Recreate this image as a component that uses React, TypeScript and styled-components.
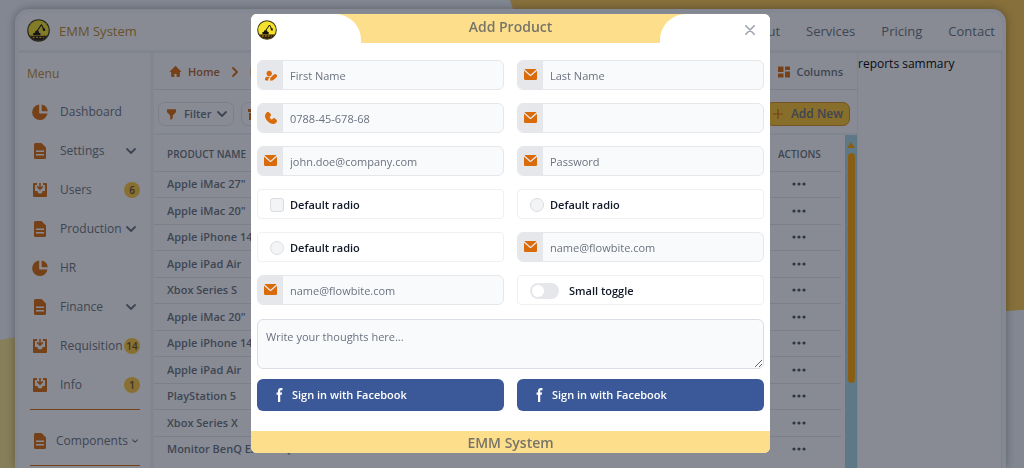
import React from "react";
import styled, { createGlobalStyle, css } from "styled-components";

const font = `"Open Sans", "Noto Sans", sans-serif`;
const amber = "#d96b0a";
const ink = "#6b7280";
const line = "#e5e7eb";

const GlobalStyle = createGlobalStyle`
  *, *::before, *::after { box-sizing: border-box; }
  body { margin: 0; font-family: ${font}; font-size: 12px; line-height: 20px; color: ${ink}; }
  button, input, textarea { font: inherit; color: inherit; margin: 0; }
  button { cursor: pointer; }
  a { color: inherit; text-decoration: none; }
  h1, h2, p, ul { margin: 0; padding: 0; }
  svg { display: block; flex: none; }
`;

/* ---------- icons ---------- */

type IconProps = { size?: number };

const PieIcon = ({ size = 16 }: IconProps) => (
  <svg width={size} height={size} viewBox="0 0 20 20" fill="currentColor" aria-hidden="true">
    <path d="M9 0.600A9.700 9.700 0 1 0 19.400 12H10a1 1 0 0 1-1-1Z" />
    <path d="M12 0.600V8a1 1 0 0 0 1 1h6.800A9.700 9.700 0 0 0 12 .600Z" />
  </svg>
);

const DocIcon = ({ size = 16 }: IconProps) => (
  <svg width={size} height={size} viewBox="0 0 16 16" fill="currentColor" aria-hidden="true">
    <path
      fillRule="evenodd"
      d="M3.500 0h6L14 4.500V14.500a1.500 1.500 0 0 1-1.500 1.500h-9A1.500 1.500 0 0 1 2 14.500v-13A1.500 1.500 0 0 1 3.500 0ZM4 7.500V9h8V7.500ZM4 11v1.500h8V11Z"
    />
  </svg>
);

const InboxIcon = ({ size = 16 }: IconProps) => (
  <svg width={size} height={size} viewBox="0 0 16 16" fill="currentColor" aria-hidden="true">
    <path d="M2 1h3v2H3v6h2.500a2.500 2.500 0 0 0 5 0H13V3h-2V1h3a1 1 0 0 1 1 1v12a1 1 0 0 1-1 1H2a1 1 0 0 1-1-1V2a1 1 0 0 1 1-1Z" />
    <path d="M7.200 1h1.600v4.200l1.500-1.400 1.100 1.100L8 8.200 4.600 4.900l1.100-1.100 1.500 1.400Z" />
  </svg>
);

const Chevron = ({ size = 10, right = false }: { size?: number; right?: boolean }) => (
  <svg width={size} height={size} viewBox="0 0 10 10" fill="none" stroke="currentColor" strokeWidth="1.800" strokeLinecap="round" strokeLinejoin="round" aria-hidden="true">
    <path d={right ? "M3 1l4 4-4 4" : "M1 3l4 4 4-4"} />
  </svg>
);

const HomeIcon = () => (
  <svg width="11" height="11" viewBox="0 0 20 20" fill="currentColor" aria-hidden="true">
    <path d="m19.707 9.293-2-2-7-7a1 1 0 0 0-1.414 0l-7 7-2 2a1 1 0 0 0 1.414 1.414L2 10.414V18a2 2 0 0 0 2 2h3a1 1 0 0 0 1-1v-4a1 1 0 0 1 1-1h2a1 1 0 0 1 1 1v4a1 1 0 0 0 1 1h3a2 2 0 0 0 2-2v-7.586l.293.293a1 1 0 0 0 1.414-1.414Z" />
  </svg>
);

const FunnelIcon = () => (
  <svg width="13" height="13" viewBox="0 0 20 20" fill="currentColor" aria-hidden="true">
    <path d="M3 3a1 1 0 011-1h12a1 1 0 011 1v3a1 1 0 01-.293.707L12 11.414V15a1 1 0 01-.293.707l-2 2A1 1 0 018 17v-5.586L3.293 6.707A1 1 0 013 6V3z" />
  </svg>
);

const BoxIcon = () => (
  <svg width="13" height="13" viewBox="0 0 13 13" fill="currentColor" aria-hidden="true">
    <path d="M0 1h13v3H0ZM1 5h11v7H1Z" />
  </svg>
);

const GridIcon = () => (
  <svg width="12" height="12" viewBox="0 0 12 12" fill="currentColor" aria-hidden="true">
    <path d="M0 .500h5.500v5.500H0ZM7 .500h5v3.500H7ZM0 7.500h5.500v4H0ZM7 5.500h5v6H7Z" />
  </svg>
);

const PlusIcon = () => (
  <svg width="10" height="10" viewBox="0 0 10 10" fill="none" stroke={amber} strokeWidth="1.200" aria-hidden="true">
    <path d="M5 0v10M0 5h10" />
  </svg>
);

const DotsIcon = () => (
  <svg width="14" height="4" viewBox="0 0 14 4" fill="currentColor" aria-hidden="true">
    <circle cx="2" cy="2" r="1.600" />
    <circle cx="7" cy="2" r="1.600" />
    <circle cx="12" cy="2" r="1.600" />
  </svg>
);

const MailIcon = () => (
  <svg width="13" height="11" viewBox="0 0 20 16" preserveAspectRatio="none" fill="currentColor" aria-hidden="true">
    <path d="m10.036 8.278 9.258-7.790A1.979 1.979 0 0 0 18 0H2A1.987 1.987 0 0 0 .641.541l9.395 7.737Z" />
    <path d="M11.241 9.817c-.360.275-.801.425-1.255.427-.428 0-.845-.138-1.187-.395L0 2.600V14a2 2 0 0 0 2 2h16a2 2 0 0 0 2-2V2.500l-8.759 7.317Z" />
  </svg>
);

const PhoneIcon = () => (
  <svg width="12" height="12" viewBox="0 0 18 18" fill="currentColor" aria-hidden="true">
    <path d="M18 13.446a3.020 3.020 0 0 0-.946-1.985l-1.400-1.400a3.054 3.054 0 0 0-4.218 0l-.700.700a.983.983 0 0 1-1.390 0l-2.100-2.100a.983.983 0 0 1 0-1.389l.700-.700a2.980 2.980 0 0 0 0-4.217l-1.400-1.400a2.824 2.824 0 0 0-4.218 0c-3.619 3.619-3 8.229 1.752 12.979C6.785 16.639 9.450 18 11.912 18a7.175 7.175 0 0 0 5.139-2.325A2.900 2.900 0 0 0 18 13.446Z" />
  </svg>
);

const UserEditIcon = () => (
  <svg width="13" height="12" viewBox="0 0 13 12" fill="currentColor" aria-hidden="true">
    <circle cx="5.200" cy="4.400" r="2.600" />
    <path d="M1.300 9c.5-.9 1.300-1.300 2.300-1.300h2.600L4.300 9.800v1.600H2c-1.100 0-1.400-1.200-.7-2.400Z" />
    <path d="M9.600 5.700a1.900 1.900 0 0 1 2.900 2.500L9.200 11.200l-3.200.5.400-2.900Z" />
  </svg>
);

const FacebookIcon = () => (
  <svg width="7" height="14" viewBox="0 0 8 19" fill="currentColor" aria-hidden="true">
    <path d="M6.135 3H8V0H6.135a4.147 4.147 0 0 0-4.142 4.142V6H0v3h2v9.938h3V9h2.021l.592-3H5V3.591A.600.600 0 0 1 5.592 3h.543Z" />
  </svg>
);

const CloseIcon = () => (
  <svg width="10" height="10" viewBox="0 0 10 10" fill="none" stroke="currentColor" strokeWidth="1.600" strokeLinecap="round" aria-hidden="true">
    <path d="M.8.800l8.400 8.400M9.200.800L.8 9.200" />
  </svg>
);

const Logo = ({ size = 20 }: IconProps) => (
  <svg width={size} height={size} viewBox="0 0 24 24" role="img" aria-label="EMM logo">
    <circle cx="12" cy="12" r="11.800" fill="#3a3412" />
    <circle cx="12" cy="12" r="10.600" fill="#f3e12a" />
    <path d="M3 17.500h18A10.600 10.600 0 0 1 12 22.800 10.600 10.600 0 0 1 3 17.500Z" fill="#2a1c0c" />
    <path d="M6.500 14.500h1.500l1-2.300h3l.8 2.300H14v2.500H6.500Z" fill="#17130a" />
    <path d="M10.500 12.500l4.500-6.500 2.500 4.500" fill="none" stroke="#17130a" strokeWidth="1.200" strokeLinejoin="round" />
    <path d="M16 10h2.800l.2 2.500h-2Z" fill="#17130a" />
    <path d="M6 19.200h2M9.500 19.200h2M13 19.200h2M16.500 19.200h1" stroke="#d9a51e" strokeWidth="1.300" />
  </svg>
);

/* ---------- page ---------- */

const Page = styled.div`
  position: relative;
  display: flex;
  height: 100vh;
  overflow: hidden;
  padding: 9px 18px 0 15px;
  background: #f3f8fb;
`;

const Backdrop = styled.svg`
  position: absolute;
  inset: 0;
  width: 100%;
  height: 100%;
`;

const Card = styled.div`
  position: relative;
  flex: 1;
  min-width: 0;
  display: flex;
  flex-direction: column;
  border: 4px solid #f7f9fe;
  border-bottom: 0;
  border-radius: 14px 14px 0 0;
  background: #fff;
  box-shadow: 0 0 10px rgba(0, 0, 0, 0.35);
`;

const TopBar = styled.header`
  display: flex;
  align-items: center;
  justify-content: space-between;
  height: 40px;
  padding: 0 7px 2px 8px;
  border-bottom: 3px solid #f1f3f7;
`;

const Brand = styled.a`
  display: flex;
  align-items: center;
  gap: 9px;
  color: #c08a2b;
  font-size: 13px;
  font-weight: 500;
`;

const Nav = styled.nav`
  display: flex;
  gap: 26px;
  font-size: 13px;
  font-weight: 500;
`;

const Body = styled.div`
  flex: 1;
  min-height: 0;
  display: flex;
`;

const Sidebar = styled.aside`
  width: 135px;
  flex: none;
  overflow: hidden;
  padding: 11px 10px 0 8px;
  border-right: 4px solid #f4f5fa;
`;

const MenuTitle = styled.h2`
  color: #c08a2b;
  font-size: 12px;
  font-weight: 400;
`;

const MenuList = styled.ul`
  list-style: none;
  padding: 8px 0 5px 3px;
`;

const MenuItem = styled.a<{ $tight?: boolean }>`
  display: flex;
  align-items: center;
  height: 39px;
  padding-left: 2px;
  gap: ${(p) => (p.$tight ? 8 : 12)}px;
  white-space: nowrap;
  & > svg:first-child { color: ${amber}; }
  & > svg:last-child { margin-right: ${(p) => (p.$tight ? 2 : 4)}px; }
`;

const MenuLabel = styled.span`
  flex: 1;
  width: 0;
`;

const Badge = styled.span`
  width: 16px;
  height: 16px;
  flex: none;
  margin-left: -12px;
  border-radius: 50%;
  background: #fcc93a;
  color: #6b4a2a;
  font-size: 10px;
  font-weight: 600;
  line-height: 16px;
  text-align: center;
`;

const Divider = styled.hr`
  height: 1px;
  margin: 0 0 0 3px;
  border: 0;
  background: ${amber};
`;

const Group = styled.div`
  padding: 11px 0 5px 3px;
`;

const Main = styled.main`
  flex: 1;
  min-width: 0;
  display: flex;
  flex-direction: column;
  border-right: 1px solid #eef0f5;
`;

const Bar = styled.div<{ $tools?: boolean }>`
  display: flex;
  align-items: center;
  justify-content: space-between;
  ${(p) =>
    p.$tools
      ? css`
          height: 45px;
          padding: 5px 7px 0 4px;
          border-bottom: 2px solid #f0f2f6;
        `
      : css`
          height: 37px;
          padding: 1px 14px 0 16px;
          border-bottom: 1px solid ${line};
        `}
`;

const Cluster = styled.div<{ $gap: number }>`
  display: flex;
  align-items: center;
  gap: ${(p) => p.$gap}px;
  font-size: 11px;
  font-weight: 600;
  & > svg { color: ${amber}; }
`;

const Crumb = styled.a`
  display: flex;
  align-items: center;
  gap: 7px;
  color: #b4632a;
  svg { color: ${amber}; }
`;

const PlainButton = styled.button`
  display: flex;
  align-items: center;
  gap: 6px;
  padding: 0;
  border: 0;
  background: none;
  font-size: 11px;
  font-weight: 600;
  & > svg:first-child { color: ${amber}; }
`;

const ToolButton = styled(PlainButton)<{ $primary?: boolean }>`
  height: 24px;
  padding: 0 6px;
  border: 1px solid ${(p) => (p.$primary ? "#d98f1c" : line)};
  border-radius: 7px;
  background: ${(p) => (p.$primary ? "#fcc52c" : "#fff")};
  gap: ${(p) => (p.$primary ? 8 : 6)}px;
  font-size: ${(p) => (p.$primary ? 12 : 11)}px;
`;

const TableArea = styled.div`
  flex: 1;
  min-height: 0;
  overflow: hidden;
  display: flex;
`;

const Table = styled.table`
  flex: 1;
  border-collapse: collapse;
  align-self: flex-start;
  margin-right: 4px;
  font-size: 11px;
  font-weight: 600;
  white-space: nowrap;
  text-align: left;
  th { height: 36px; padding: 2px 0 0 13px; font-size: 10px; font-weight: 600; line-height: 16px; }
  td { height: 26px; padding: 0 0 0 13px; line-height: 16px; border-top: 1px solid ${line}; }
  tbody tr:nth-child(even) td { height: 27px; }
  th:last-child, td:last-child { width: 76px; }
`;

const RowMenu = styled.button`
  display: block;
  padding: 6px 14px;
  border: 0;
  background: none;
  color: #4b5563;
`;

const Track = styled.div`
  width: 12px;
  flex: none;
  display: flex;
  flex-direction: column;
  align-items: center;
  gap: 5px;
  padding-top: 7px;
  background: lightblue;
`;

const Arrow = styled.svg`
  color: orange;
`;

const Thumb = styled.div`
  width: 7px;
  height: 230px;
  border-radius: 4px;
  background: orange;
`;

const Reports = styled.section`
  width: 144px;
  flex: none;
  padding-top: 1px;
  border-right: 1px solid #e3edf5;
  color: #000;
`;

/* ---------- dialog ---------- */

const Overlay = styled.div`
  position: fixed;
  inset: 0;
  display: flex;
  align-items: center;
  justify-content: center;
  padding: 0 3px 2px 0;
  background: rgba(17, 24, 39, 0.5);
`;

const Dialog = styled.div`
  width: 100%;
  max-width: 519px;
  overflow: hidden;
  border-radius: 6px;
  background: #fff;
`;

const DialogHead = styled.div`
  display: grid;
  grid-template-columns: 110px 1fr 110px;
  height: 29px;
  background: #fddf8b;
`;

const HeadEnd = styled.div<{ $side: "left" | "right" }>`
  display: flex;
  align-items: center;
  padding: 3px 12px 0 6px;
  background: #fff;
  justify-content: ${(p) => (p.$side === "left" ? "flex-start" : "flex-end")};
  border-radius: ${(p) => (p.$side === "left" ? "0 26px 0 0" : "26px 0 0 0")};
`;

const CloseButton = styled.button`
  display: grid;
  place-items: center;
  padding: 3px;
  border: 0;
  background: none;
  color: #9ca3af;
`;

const DialogTitle = styled.h1`
  color: #77756a;
  font-size: 14px;
  font-weight: 600;
  line-height: 26px;
  text-align: center;
`;

const Form = styled.form`
  display: grid;
  grid-template-columns: 1fr 1fr;
  gap: 13px;
  padding: 17px 6px 20px;
  font-size: 11px;
`;

const Field = styled.label`
  display: flex;
  height: 30px;
  overflow: hidden;
  border: 1px solid ${line};
  border-radius: 6px;
  background: #f9fafb;
`;

const Prefix = styled.span`
  display: grid;
  place-items: center;
  width: 25px;
  flex: none;
  background: ${line};
  color: ${amber};
`;

const Input = styled.input`
  flex: 1;
  min-width: 0;
  padding: 2px 7px 0;
  border: 0;
  outline: 0;
  background: none;
  &::placeholder { color: ${ink}; opacity: 1; }
`;

const Choice = styled.label`
  display: flex;
  align-items: center;
  gap: 6px;
  height: 30px;
  padding: 2px 0 0 12px;
  border: 1px solid #eef0f3;
  border-radius: 4px;
  color: #111827;
  font-weight: 600;
`;

const Tick = styled.input`
  appearance: none;
  width: 14px;
  height: 14px;
  border: 1px solid #d9dce1;
  border-radius: ${(p) => (p.type === "radio" ? "50%" : "3px")};
  background: #f3f4f6;
  &:checked { background: ${amber}; }
`;

const Toggle = styled.input`
  appearance: none;
  display: flex;
  width: 29px;
  height: 16px;
  margin-right: 4px;
  padding: 2px;
  border-radius: 8px;
  background: ${line};
  &::before {
    content: "";
    width: 12px;
    height: 12px;
    border-radius: 50%;
    background: #fff;
  }
  &:checked { justify-content: flex-end; background: ${amber}; }
`;

const Thoughts = styled.textarea`
  grid-column: 1 / -1;
  height: 50px;
  margin: 1px 0 -3px;
  padding: 7px 8px;
  border: 1px solid #d9dee6;
  border-radius: 6px;
  background: #f9fafb;
  resize: vertical;
  &::placeholder { color: ${ink}; opacity: 1; }
`;

const SocialButton = styled.button`
  display: flex;
  align-items: center;
  gap: 9px;
  height: 32px;
  padding: 1px 19px 0;
  border: 0;
  border-radius: 6px;
  background: #3b5998;
  color: #fff;
  font-weight: 600;
`;

const DialogFoot = styled.div`
  height: 22px;
  background: #fddf8b;
  color: #77756a;
  font-size: 14px;
  font-weight: 600;
  line-height: 24px;
  text-align: center;
`;

/* ---------- data ---------- */

const menu = [
  { label: "Dashboard", Icon: PieIcon },
  { label: "Settings", Icon: DocIcon, open: true },
  { label: "Users", Icon: InboxIcon, badge: 6 },
  { label: "Production", Icon: DocIcon, open: true },
  { label: "HR", Icon: PieIcon },
  { label: "Finance", Icon: DocIcon, open: true },
  { label: "Requisition", Icon: InboxIcon, badge: 14 },
  { label: "Info", Icon: InboxIcon, badge: 1 },
];

const products = [
  'Apple iMac 27"',
  'Apple iMac 20"',
  "Apple iPhone 14",
  "Apple iPad Air",
  "Xbox Series S",
  'Apple iMac 20"',
  "Apple iPhone 14",
  "Apple iPad Air",
  "PlayStation 5",
  "Xbox Series X",
  "Monitor BenQ EX2710Q",
];

const TextField = ({ hint, label, type = "text", icon = <MailIcon /> }: { hint: string; label?: string; type?: string; icon?: React.ReactNode }) => (
  <Field>
    <Prefix>{icon}</Prefix>
    <Input type={type} placeholder={hint} aria-label={label ?? hint} />
  </Field>
);

export default function App() {
  return (
    <>
      <GlobalStyle />
      <Page>
        <Backdrop viewBox="0 0 1024 468" preserveAspectRatio="none" aria-hidden="true">
          <path d="M510 0H1024V310Q980 311 940 320L530 60Z" fill="#fcc84e" />
          <path d="M0 340Q12 337 30 337L300 468H0Z" fill="#fde68a" />
        </Backdrop>
        <Card>
          <TopBar>
            <Brand href="#">
              <Logo size={23} />
              EMM System
            </Brand>
            <Nav>
              {["About", "Services", "Pricing", "Contact"].map((n) => (
                <a href="#" key={n}>{n}</a>
              ))}
            </Nav>
          </TopBar>
          <Body>
            <Sidebar>
              <MenuTitle>Menu</MenuTitle>
              <MenuList>
                {menu.map(({ label, Icon, open, badge }) => (
                  <li key={label}>
                    <MenuItem href="#">
                      <Icon />
                      <MenuLabel>{label}</MenuLabel>
                      {open && <Chevron />}
                      {badge && <Badge>{badge}</Badge>}
                    </MenuItem>
                  </li>
                ))}
              </MenuList>
              <Divider />
              <Group>
                <MenuItem href="#" $tight>
                  <DocIcon />
                  <MenuLabel>Components</MenuLabel>
                  <Chevron size={6} />
                </MenuItem>
              </Group>
              <Divider />
            </Sidebar>
            <Main>
              <Bar>
                <Cluster $gap={10}>
                  <Crumb href="#"><HomeIcon />Home</Crumb>
                  <Chevron right />
                  <a href="#">Products</a>
                </Cluster>
                <PlainButton type="button"><GridIcon />Columns</PlainButton>
              </Bar>
              <Bar $tools>
                <Cluster $gap={7}>
                  <ToolButton type="button"><FunnelIcon />Filter<Chevron /></ToolButton>
                  <ToolButton type="button" aria-label="Archive"><BoxIcon /></ToolButton>
                </Cluster>
                <ToolButton type="button" $primary><PlusIcon />Add New</ToolButton>
              </Bar>
              <TableArea>
                <Table>
                  <thead>
                    <tr><th>PRODUCT NAME</th><th>ACTIONS</th></tr>
                  </thead>
                  <tbody>
                    {products.map((name, i) => (
                      <tr key={i}>
                        <td>{name}</td>
                        <td><RowMenu type="button" aria-label={`Actions for ${name}`}><DotsIcon /></RowMenu></td>
                      </tr>
                    ))}
                  </tbody>
                </Table>
                <Track>
                  <Arrow width="8" height="6" viewBox="0 0 8 6" aria-hidden="true">
                    <path d="M4 0l4 6H0Z" fill="currentColor" />
                  </Arrow>
                  <Thumb />
                </Track>
              </TableArea>
            </Main>
            <Reports>
              <p>reports sammary</p>
            </Reports>
          </Body>
        </Card>
      </Page>
      <Overlay>
        <Dialog role="dialog" aria-modal="true" aria-labelledby="dialog-title">
          <DialogHead>
            <HeadEnd $side="left"><Logo size={20} /></HeadEnd>
            <DialogTitle id="dialog-title">Add Product</DialogTitle>
            <HeadEnd $side="right">
              <CloseButton type="button" aria-label="Close"><CloseIcon /></CloseButton>
            </HeadEnd>
          </DialogHead>
          <Form>
            <TextField hint="First Name" icon={<UserEditIcon />} />
            <TextField hint="Last Name" />
            <TextField hint="0788-45-678-68" type="tel" label="Phone" icon={<PhoneIcon />} />
            <TextField hint="" label="Contact" />
            <TextField hint="john.doe@company.com" type="email" label="Email" />
            <TextField hint="Password" type="password" />
            <Choice><Tick type="checkbox" />Default radio</Choice>
            <Choice><Tick type="radio" name="choice" />Default radio</Choice>
            <Choice><Tick type="radio" name="choice" />Default radio</Choice>
            <TextField hint="name@flowbite.com" type="email" label="Work email" />
            <TextField hint="name@flowbite.com" type="email" label="Other email" />
            <Choice><Toggle type="checkbox" role="switch" />Small toggle</Choice>
            <Thoughts placeholder="Write your thoughts here..." aria-label="Your thoughts" />
            <SocialButton type="button"><FacebookIcon />Sign in with Facebook</SocialButton>
            <SocialButton type="button"><FacebookIcon />Sign in with Facebook</SocialButton>
          </Form>
          <DialogFoot>EMM System</DialogFoot>
        </Dialog>
      </Overlay>
    </>
  );
}
